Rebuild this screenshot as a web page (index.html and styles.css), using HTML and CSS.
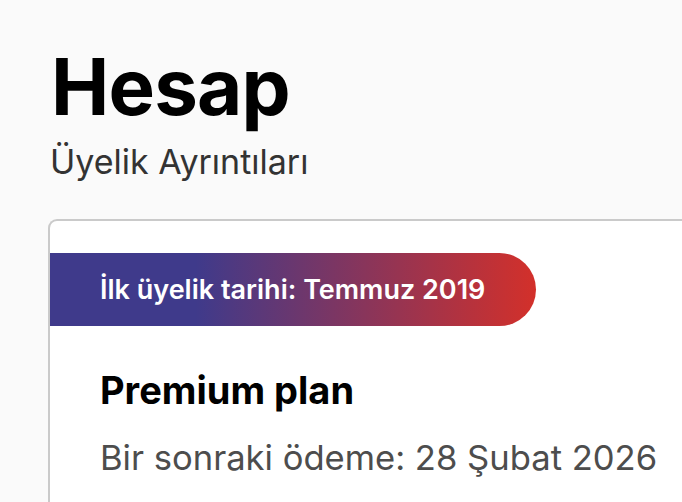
FILE: index.html
```html
<!DOCTYPE html>
<html lang="tr">
<head>
<meta charset="utf-8">
<link rel="stylesheet" href="styles.css">
</head>
<body>
<main class="page">
  <h1 class="title">Hesap</h1>
  <p class="subtitle">Üyelik Ayrıntıları</p>
  <section class="card">
    <div class="banner">İlk üyelik tarihi: Temmuz 2019</div>
    <div class="plan">
      <h2 class="plan-name">Premium plan</h2>
      <p class="plan-next">Bir sonraki ödeme: 28 Şubat 2026</p>
    </div>
  </section>
</main>
</body>
</html>
```

FILE: styles.css
```css
html, body {
  margin: 0;
  padding: 0;
  background: #fafafa;
  height: 100%;
  overflow: hidden;
}
body {
  font-family: Inter, "Liberation Sans", sans-serif;
  color: #000;
}
.page {
  padding: 42px 0 0 48px;
}
.title {
  margin: 0 0 0 3px;
  font-size: 78px;
  font-weight: 700;
  line-height: 90px;
  letter-spacing: -0.8px;
}
.subtitle {
  margin: 10px 0 0 2px;
  font-size: 34px;
  line-height: 40px;
  color: #333;
}
.card {
  margin-top: 37px;
  background: #fff;
  border: 2px solid #cacaca;
  border-right: none;
  border-bottom: none;
  border-top-left-radius: 9px;
  height: 400px;
  padding-top: 32px;
}
.banner {
  width: 436px;
  height: 73px;
  padding-left: 50px;
  display: flex;
  align-items: center;
  color: #fff;
  font-size: 27px;
  font-weight: 600;
  border-radius: 0 37px 37px 0;
  background: linear-gradient(90deg, #3f3a8b 0%, #3f3a8b 30%, #d3302a 100%);
}
.plan {
  padding: 41px 0 0 50px;
}
.plan-name {
  margin: 0;
  font-size: 38px;
  font-weight: 700;
  line-height: 46px;
}
.plan-next {
  margin: 23px 0 0;
  font-size: 34.6px;
  line-height: 42px;
  color: #4d4d4d;
}
```
